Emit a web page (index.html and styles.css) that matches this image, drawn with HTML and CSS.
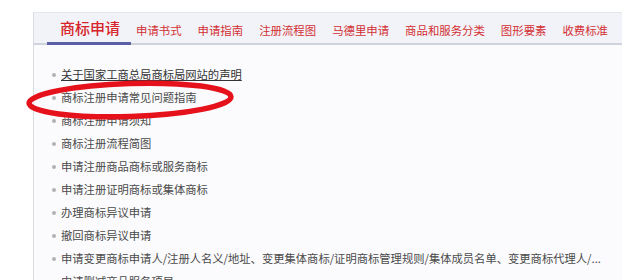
FILE: index.html
```html
<!DOCTYPE html>
<html lang="zh-CN">
<head>
<meta charset="utf-8">
<title>商标申请</title>
<link rel="stylesheet" href="styles.css">
</head>
<body>
<div class="panel">
  <div class="tabs">
    <a class="tab-title">商标申请</a>
    <nav class="tab-list">
      <a class="tab">申请书式</a>
      <a class="tab">申请指南</a>
      <a class="tab">注册流程图</a>
      <a class="tab">马德里申请</a>
      <a class="tab">商品和服务分类</a>
      <a class="tab">图形要素</a>
      <a class="tab">收费标准</a>
    </nav>
  </div>
  <ul class="items">
    <li class="item hover">关于国家工商总局商标局网站的声明</li>
    <li class="item">商标注册申请常见问题指南</li>
    <li class="item">商标注册申请须知</li>
    <li class="item">商标注册流程简图</li>
    <li class="item">申请注册商品商标或服务商标</li>
    <li class="item">申请注册证明商标或集体商标</li>
    <li class="item">办理商标异议申请</li>
    <li class="item">撤回商标异议申请</li>
    <li class="item">申请变更商标申请人/注册人名义/地址、变更集体商标/证明商标管理规则/集体成员名单、变更商标代理人/...</li>
    <li class="item">申请删减商品服务项目</li>
  </ul>
</div>
<svg class="mark" width="622" height="280" viewBox="0 0 622 280">
  <ellipse cx="130" cy="100" rx="101" ry="16.5" transform="rotate(-1.8 130 100)" fill="none" stroke="#e5121c" stroke-width="5.5"/>
</svg>
</body>
</html>
```

FILE: styles.css
```css
html, body {
  margin: 0;
  padding: 0;
  background: #ffffff;
  font-family: "Noto Sans CJK SC", "Noto Sans", sans-serif;
}
body {
  position: relative;
  width: 622px;
  height: 280px;
  overflow: hidden;
}
.panel {
  margin: 12px 0 0 33px;
  border-left: 1px solid #d9dce3;
  border-top: 1px solid #e2e5eb;
  background: #fbfbfd;
  height: 300px;
}
.tabs {
  display: flex;
  align-items: stretch;
  height: 30px;
  padding-left: 13px;
  background: #f1f3f8;
  border-bottom: 2px solid #cfd3dc;
}
.tab-title {
  width: 84px;
  box-sizing: border-box;
  padding-left: 13px;
  margin-bottom: -2px;
  font-size: 15px;
  line-height: 30px;
  color: #d7242c;
  font-weight: 500;
  border-bottom: 3px solid #5b5fa6;
}
.tab-list {
  display: flex;
  gap: 16px;
  padding-left: 5px;
}
.tab {
  font-size: 11.4px;
  line-height: 34px;
  color: #d32f33;
  white-space: nowrap;
}
.items {
  list-style: none;
  margin: 0;
  padding: 18px 0 0 18px;
}
.item {
  display: flex;
  align-items: center;
  font-size: 11.3px;
  line-height: 23px;
  color: #4a4a4a;
  white-space: nowrap;
}
.item::before {
  content: "";
  width: 4px;
  height: 4px;
  border-radius: 50%;
  background: #b1b1b1;
  margin-right: 5px;
  flex: none;
}
.item.hover {
  text-decoration: underline;
  color: #333333;
}
.mark {
  position: absolute;
  left: 0;
  top: 0;
  pointer-events: none;
}
```
